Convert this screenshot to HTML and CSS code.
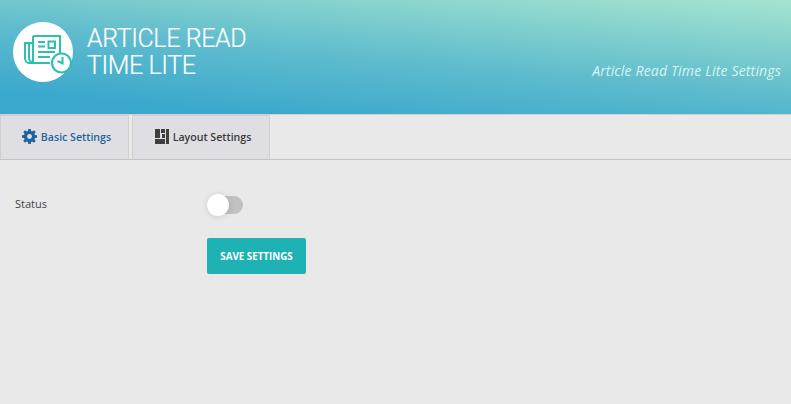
FILE: index.html
```html
<!DOCTYPE html>
<html lang="en">
<head>
    <meta charset="UTF-8">
    <meta name="viewport" content="width=device-width, initial-scale=1.0">
    <title>Article Read Time Lite</title>
    <link rel="stylesheet" href="styles.css">
</head>
<body>
    <header class="banner">
        <div class="brand">
            <div class="brand-logo">
                <svg width="60" height="60" viewBox="0 0 60 60" fill="none" stroke="#2bc0b0" stroke-width="2">
                    <path d="M20 14H47V32"/>
                    <path d="M20 14V41H37"/>
                    <path d="M20 21H12V36C12 39 14 41 16 41H20"/>
                    <path d="M16 22V36C16 38 18 40 20 41"/>
                    <path d="M25 20H32M25 24.500H32M25 30H42M25 35H37"/>
                    <path d="M35.500 19.500H42V26H35.500Z"/>
                    <circle cx="48.500" cy="41" r="9.500" fill="#fff" stroke-width="2.200"/>
                    <path d="M49.500 35V41.500L44.500 39"/>
                </svg>
            </div>
            <h1 class="brand-title">ARTICLE READ<br>TIME LITE</h1>
        </div>
        <p class="banner-sub">Article Read Time Lite Settings</p>
    </header>

    <nav class="tabs">
        <a class="tab tab-active" href="#">
            <svg width="15" height="15" viewBox="0 0 16 16">
                <path fill="#1e639f" fill-rule="evenodd" d="M6.700 0H9.300L9.700 2.200L10.900 2.700L12.800 1.400L14.600 3.200L13.300 5.100L13.800 6.300L16 6.700V9.300L13.800 9.700L13.300 10.900L14.600 12.800L12.800 14.600L10.900 13.300L9.700 13.800L9.300 16H6.700L6.300 13.800L5.100 13.300L3.200 14.600L1.400 12.800L2.700 10.900L2.200 9.700L0 9.300V6.700L2.200 6.300L2.700 5.100L1.400 3.200L3.200 1.400L5.100 2.700L6.300 2.200ZM8 5.400A2.600 2.600 0 1 0 8 10.600A2.600 2.600 0 1 0 8 5.400Z"/>
            </svg>
            Basic Settings
        </a>
        <a class="tab" href="#">
            <svg width="14" height="15" viewBox="0 0 14 15">
                <path fill="#3f3f3f" d="M0 0H5V9H0ZM6 0H10V4H6ZM11 0H14V15H11ZM7 5H10V9H7ZM0 10H10V15H0Z"/>
            </svg>
            Layout Settings
        </a>
    </nav>

    <main class="settings">
        <div class="field">
            <label class="field-label">Status</label>
            <span class="switch"><span class="switch-knob"></span></span>
        </div>
        <button class="save-btn">SAVE SETTINGS</button>
    </main>
</body>
</html>
```

FILE: styles.css
```css
* {
    box-sizing: border-box;
}

body {
    margin: 0;
    height: 404px;
    overflow: hidden;
    background-color: #e9e9e9;
    font-family: 'Open Sans', sans-serif;
    color: #444;
}

.banner {
    height: 115px;
    padding: 22px 10px 0 13px;
    display: flex;
    justify-content: space-between;
    background: linear-gradient(5deg, #3ba8cd 12%, #5fbccd 48%, #a8e6cf 102%);
    border-bottom: 1px solid #d0d0d4;
}

.brand {
    display: flex;
    align-items: flex-start;
}

.brand-logo {
    width: 60px;
    height: 60px;
    border-radius: 50%;
    background-color: #fff;
    margin-right: 14px;
}

.brand-title {
    margin: 3px 0 0;
    font-family: Roboto, sans-serif;
    font-weight: 300;
    font-size: 25px;
    line-height: 27px;
    letter-spacing: -0.4px;
    color: #fff;
    -webkit-text-stroke: 0.2px #fff;
}

.banner-sub {
    margin: 39px 0 0;
    font-family: 'Open Sans', sans-serif;
    font-style: italic;
    font-size: 14px;
    font-weight: 400;
    letter-spacing: 0.17px;
    color: #d8f3f0;
}

.tabs {
    height: 45px;
    display: flex;
    gap: 3px;
    border-bottom: 1px solid #c4c4c6;
}

.tab {
    height: 44px;
    display: flex;
    align-items: center;
    justify-content: center;
    gap: 4px;
    padding: 0 0 2px 4px;
    background-color: #dfdfe3;
    border: 1px solid #cfcfd2;
    border-bottom: none;
    font-size: 10.6px;
    font-weight: 600;
    color: #3a3a3a;
    text-decoration: none;
    width: 138px;
}

.tab-active {
    width: 129px;
    color: #1e639f;
}

.settings {
    padding: 35px 0 0 15px;
}

.field {
    display: flex;
    align-items: center;
    height: 20px;
}

.field-label {
    width: 192px;
    font-size: 11px;
    margin-top: -4px;
}

.switch {
    position: relative;
    display: block;
    width: 36px;
    height: 18px;
    border-radius: 9px;
    background-color: #c1c1c1;
}

.switch-knob {
    position: absolute;
    left: 0;
    top: -2px;
    width: 22px;
    height: 22px;
    border-radius: 50%;
    background-color: #fff;
    box-shadow: 0 1px 6px rgba(0, 0, 0, 0.12);
}

.save-btn {
    display: block;
    margin: 23px 0 0 192px;
    width: 99px;
    height: 36px;
    padding: 0;
    border: none;
    border-radius: 2px;
    background-color: #1fb2b5;
    color: #fff;
    font-family: 'Open Sans', sans-serif;
    font-size: 9.800px;
    font-weight: 700;
}
```
